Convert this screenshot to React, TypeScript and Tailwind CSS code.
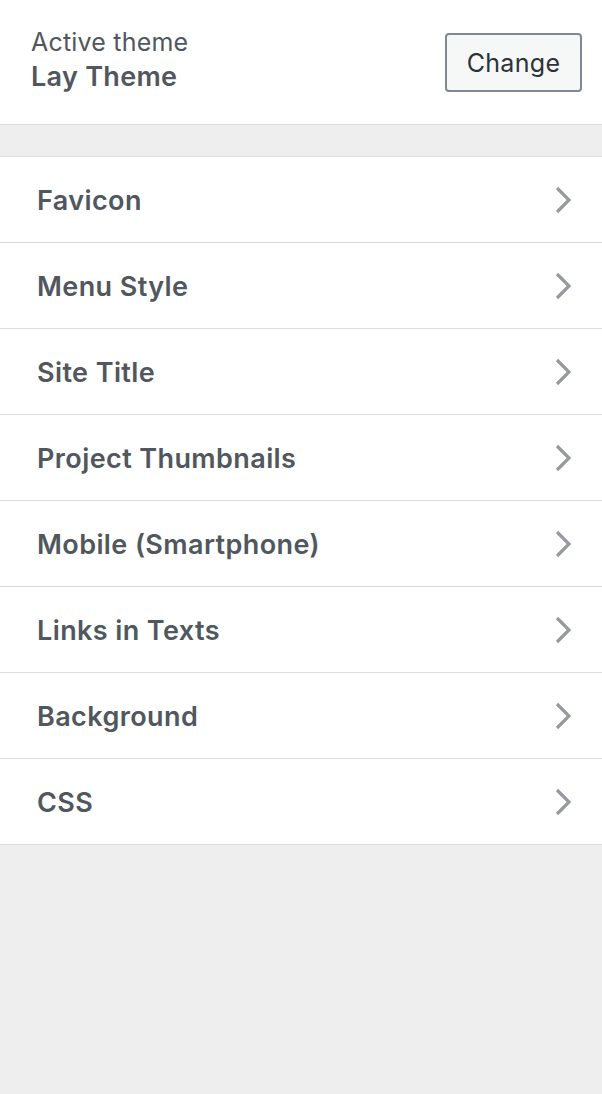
const sections = [
  "Favicon",
  "Menu Style",
  "Site Title",
  "Project Thumbnails",
  "Mobile (Smartphone)",
  "Links in Texts",
  "Background",
  "CSS",
];

function Chevron() {
  return (
    <svg width="18" height="28" viewBox="0 0 18 28" fill="none" className="text-[#969a9e]">
      <path d="M3 2 L15 14 L3 26" stroke="currentColor" strokeWidth="3.2" strokeLinejoin="miter" />
    </svg>
  );
}

export default function App() {
  return (
    <div className="min-h-screen bg-[#eeeeee] font-['Inter',sans-serif]">
      <div className="flex items-center justify-between bg-white h-[125px] border-b border-[#dcdcde] pl-[31px] pr-[20px]">
        <div className="flex flex-col pb-[4px]">
          <span className="text-[25px] leading-[34px] tracking-[0.2px] text-[#50575e]">Active theme</span>
          <span className="text-[27px] leading-[36px] tracking-[0.3px] font-semibold text-[#50575e]">Lay Theme</span>
        </div>
        <button className="h-[59px] w-[137px] pt-[3px] rounded-[4px] border-2 border-[#7e8993] bg-[#f6f7f7] text-[25px] tracking-[0.3px] text-[#2c3338]">
          Change
        </button>
      </div>
      <div className="h-[32px] border-b border-[#dcdcde]" />
      <ul className="bg-white">
        {sections.map((s) => (
          <li
            key={s}
            className="flex items-center justify-between h-[86px] border-b border-[#dcdcde] pl-[37px] pr-[30px]"
          >
            <span className="pt-[4px] text-[27px] tracking-[0.4px] font-semibold text-[#50575e]">{s}</span>
            <Chevron />
          </li>
        ))}
      </ul>
    </div>
  );
}
